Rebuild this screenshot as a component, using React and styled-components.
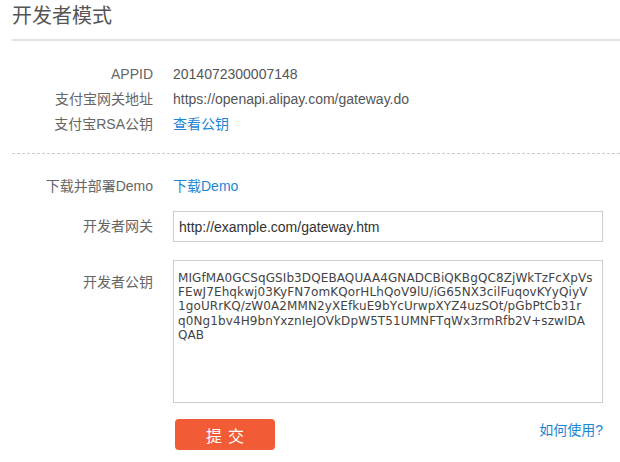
import React from "react";
import styled, { createGlobalStyle } from "styled-components";

const GlobalStyle = createGlobalStyle`
  body {
    margin: 0;
    background: #fff;
    font-family: "Liberation Sans", "Noto Sans CJK SC", sans-serif;
  }
`;

const Page = styled.div`
  padding-left: 12px;
`;

const Header = styled.div`
  padding-top: 4px;
  height: 35px;
  border-bottom: 2px solid #e2e2e2;
`;

const Title = styled.h1`
  margin: 0;
  font-size: 20px;
  line-height: 24px;
  font-weight: normal;
  color: #555;
`;

const InfoList = styled.div`
  padding: 21px 0 16px;
  border-bottom: 1px dashed #ccc;
`;

const Form = styled.form`
  padding-top: 20px;
  display: flex;
  flex-direction: column;
`;

const Row = styled.div`
  display: grid;
  grid-template-columns: 141px 1fr;
  column-gap: 20px;
  margin-bottom: ${(p) => p.$gap || 0}px;
  padding-right: 17px;
`;

const Label = styled.div`
  text-align: right;
  font-size: 14px;
  line-height: 25px;
  color: #666;
  padding-top: ${(p) => p.$top || 0}px;
`;

const Value = styled.div`
  font-size: 14px;
  line-height: 25px;
  color: #555;
`;

const Link = styled.a`
  font-size: 14px;
  line-height: 25px;
  color: #1d86d2;
  text-decoration: none;
`;

const TextInput = styled.input`
  box-sizing: border-box;
  width: 100%;
  height: 31px;
  margin: 0;
  padding: 0 5px;
  border: 1px solid #ccc;
  font-family: "Liberation Sans", sans-serif;
  font-size: 14px;
  color: #333;
  outline: none;
`;

const KeyArea = styled.textarea`
  box-sizing: border-box;
  width: 100%;
  height: 143px;
  margin: 0;
  padding: 10px 4px;
  border: 1px solid #ccc;
  font-family: "DejaVu Sans", sans-serif;
  font-size: 12px;
  line-height: 14.2px;
  letter-spacing: 0.1px;
  color: #444;
  resize: none;
  outline: none;
  white-space: pre;
  overflow: hidden;
`;

const Actions = styled.div`
  display: flex;
  align-items: flex-start;
  justify-content: space-between;
`;

const SubmitButton = styled.button`
  width: 100px;
  height: 31px;
  margin-left: 2px;
  border: none;
  border-radius: 4px;
  background: #f15b35;
  color: #fff;
  font-family: "Liberation Sans", "Noto Sans CJK SC", sans-serif;
  font-size: 16px;
  letter-spacing: 6px;
  text-indent: 6px;
  cursor: pointer;
`;

const HelpLink = styled(Link)`
  line-height: 20px;
  margin-top: 1px;
`;

const publicKey = [
  "MIGfMA0GCSqGSIb3DQEBAQUAA4GNADCBiQKBgQC8ZjWkTzFcXpVs",
  "FEwJ7Ehqkwj03KyFN7omKQorHLhQoV9lU/iG65NX3cilFuqovKYyQiyV",
  "1goURrKQ/zW0A2MMN2yXEfkuE9bYcUrwpXYZ4uzSOt/pGbPtCb31r",
  "q0Ng1bv4H9bnYxznIeJOVkDpW5T51UMNFTqWx3rmRfb2V+szwIDA",
  "QAB",
].join("\n");

function App() {
  return (
    <Page>
      <GlobalStyle />
      <Header>
        <Title>开发者模式</Title>
      </Header>
      <InfoList>
        <Row>
          <Label>APPID</Label>
          <Value>2014072300007148</Value>
        </Row>
        <Row>
          <Label>支付宝网关地址</Label>
          <Value>https://openapi.alipay.com/gateway.do</Value>
        </Row>
        <Row>
          <Label>支付宝RSA公钥</Label>
          <Value>
            <Link href="#">查看公钥</Link>
          </Value>
        </Row>
      </InfoList>
      <Form onSubmit={(e) => e.preventDefault()}>
        <Row $gap={12}>
          <Label>下载并部署Demo</Label>
          <Value>
            <Link href="#">下载Demo</Link>
          </Value>
        </Row>
        <Row $gap={18}>
          <Label $top={3}>开发者网关</Label>
          <TextInput defaultValue="http://example.com/gateway.htm" />
        </Row>
        <Row $gap={16}>
          <Label $top={10}>开发者公钥</Label>
          <KeyArea defaultValue={publicKey} spellCheck={false} />
        </Row>
        <Row>
          <div />
          <Actions>
            <SubmitButton type="submit">提交</SubmitButton>
            <HelpLink href="#">如何使用?</HelpLink>
          </Actions>
        </Row>
      </Form>
    </Page>
  );
}

export default App;
